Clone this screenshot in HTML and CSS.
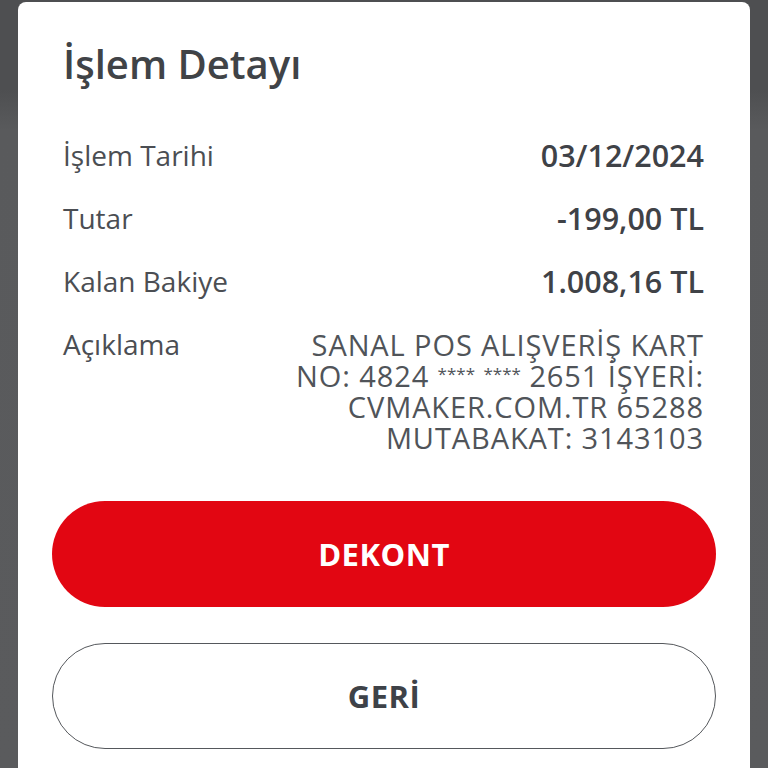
FILE: index.html
```html
<!DOCTYPE html>
<html lang="tr">
<head>
    <meta charset="UTF-8">
    <meta name="viewport" content="width=device-width, initial-scale=1.0">
    <title>İşlem Detayı</title>
    <link rel="stylesheet" href="styles.css">
</head>
<body>
    <div class="sheet">
        <h1 class="sheet-title">İşlem Detayı</h1>

        <div class="details">
            <div class="row">
                <span class="label">İşlem Tarihi</span>
                <span class="value">03/12/2024</span>
            </div>
            <div class="row">
                <span class="label">Tutar</span>
                <span class="value">-199,00 TL</span>
            </div>
            <div class="row">
                <span class="label">Kalan Bakiye</span>
                <span class="value">1.008,16 TL</span>
            </div>
            <div class="row">
                <span class="label">Açıklama</span>
                <div class="desc">
                    <div>SANAL POS ALIŞVERİŞ KART</div>
                    <div>NO: 4824 <span class="mask">****</span> <span class="mask">****</span> 2651 İŞYERİ:</div>
                    <div>CVMAKER.COM.TR 65288</div>
                    <div>MUTABAKAT: 3143103</div>
                </div>
            </div>
        </div>

        <div class="actions">
            <button class="btn btn-primary">DEKONT</button>
            <button class="btn btn-outline">GERİ</button>
        </div>
    </div>
</body>
</html>
```

FILE: styles.css
```css
body {
    font-family: "Open Sans", "Noto Sans", sans-serif;
    background: linear-gradient(#4e4f51 0, #4e4f51 90px, #595a5c 130px, #5a5b5d 100%);
    margin: 0;
    padding: 0;
    height: 768px;
    overflow: hidden;
}

.sheet {
    margin: 2px 18px 0;
    height: 766px;
    background-color: #fff;
    border-radius: 8px 8px 0 0;
    padding: 38px 34px 0;
    box-sizing: border-box;
}

.sheet-title {
    margin: 0 11px;
    font-size: 40px;
    line-height: 48px;
    font-weight: 600;
    color: #404347;
}

.details {
    margin: 52px 12px 0 11px;
    display: flex;
    flex-direction: column;
    gap: 32px;
}

.row {
    display: flex;
    justify-content: space-between;
    align-items: flex-start;
    line-height: 31px;
}

.label {
    color: #4b4e53;
    font-size: 28px;
    white-space: nowrap;
}

.value {
    color: #3f4247;
    font-weight: 600;
    font-size: 30.5px;
}

.desc {
    text-align: right;
    color: #505459;
    font-size: 29px;
    letter-spacing: 0.9px;
    line-height: 31px;
    white-space: nowrap;
}

.mask {
    font-size: 17px;
    letter-spacing: 0;
    line-height: 0;
    vertical-align: 7px;
}

.actions {
    margin-top: 48px;
    display: flex;
    flex-direction: column;
    gap: 36px;
}

.btn {
    height: 106px;
    border-radius: 53px;
    font-family: "Open Sans", "Noto Sans", sans-serif;
    font-size: 31px;
    letter-spacing: 0.5px;
    font-weight: 700;
    cursor: pointer;
}

.btn-primary {
    background-color: #e20612;
    border: none;
    color: #fff;
}

.btn-outline {
    background-color: #fff;
    border: 1.5px solid #55585c;
    color: #3e4248;
}
```
